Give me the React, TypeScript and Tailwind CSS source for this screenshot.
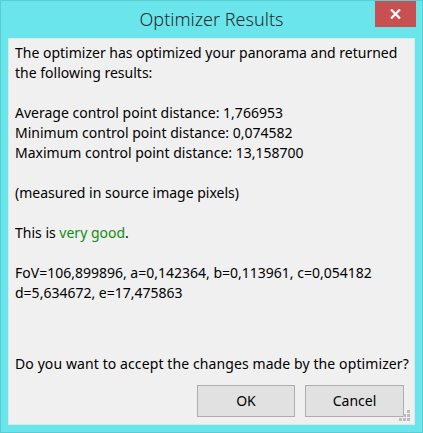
import React from 'react';

const font = { fontFamily: '"Noto Sans", "Open Sans", sans-serif' };

// --- Resize grip dots ---
const Grip: React.FC = () => (
  <svg className="absolute right-[3px] bottom-[2px]" width="12" height="12" viewBox="0 0 12 12">
    {[
      [8, 0],
      [4, 4],
      [8, 4],
      [0, 8],
      [4, 8],
      [8, 8],
    ].map(([x, y]) => (
      <rect key={`${x}-${y}`} x={x} y={y} width="3" height="3" fill="#bcbcbc" />
    ))}
  </svg>
);

export default function App() {
  return (
    <div
      className="w-[423px] h-[433px] bg-[#6be5ec] border border-[#58cdd4] flex flex-col px-[7px] pb-[7px] relative"
      style={font}
    >
      {/* Title bar */}
      <div className="h-[37px] flex items-center justify-center">
        <span className="text-[18px] font-light text-[#1d2d2f] leading-none -mt-[1px]">Optimizer Results</span>
      </div>
      <button className="absolute top-0 right-[6px] w-[41px] h-[26px] bg-[#c75050] flex items-center justify-center">
        <svg width="11" height="10" viewBox="0 0 11 10">
          <path d="M1 0.5 L10 9.5 M10 0.5 L1 9.5" stroke="white" strokeWidth="2.2" />
        </svg>
      </button>

      {/* Client area */}
      <div className="flex-1 bg-[#f0f0f0] border border-[#d9e9ea] flex flex-col pl-[6px] pt-[4px] relative text-[14px] leading-[20px] text-black">
        <p>The optimizer has optimized your panorama and returned</p>
        <p>the following results:</p>
        <p>&nbsp;</p>
        <p>Average control point distance: 1,766953</p>
        <p>Minimum control point distance: 0,074582</p>
        <p>Maximum control point distance: 13,158700</p>
        <p>&nbsp;</p>
        <p>(measured in source image pixels)</p>
        <p>&nbsp;</p>
        <p>
          This is <span className="text-[#138a13]">very good</span>.
        </p>
        <p>&nbsp;</p>
        <p>FoV=106,899896, a=0,142364, b=0,113961, c=0,054182</p>
        <p>d=5,634672, e=17,475863</p>

        <div className="flex-1" />
        <p className="tracking-[0.1px]">Do you want to accept the changes made by the optimizer?</p>

        <div className="flex justify-end gap-[10px] pr-[10px] mt-[11px] mb-[7px]">
          <button className="w-[98px] h-[32px] bg-[#e1e1e1] border border-[#adadad] text-[14px]">OK</button>
          <button className="w-[99px] h-[32px] bg-[#e1e1e1] border border-[#adadad] text-[14px]">Cancel</button>
        </div>
        <Grip />
      </div>
    </div>
  );
}
